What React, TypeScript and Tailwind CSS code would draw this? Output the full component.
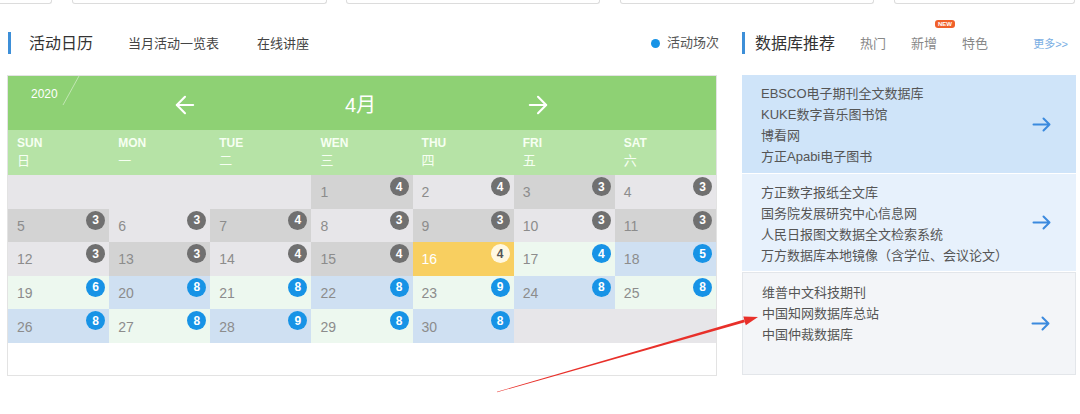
import { ArrowLeft, ArrowRight } from 'lucide-react'

const counts: Record<number, number> = {
  1: 4, 2: 4, 3: 3, 4: 3, 5: 3, 6: 3, 7: 4, 8: 3, 9: 3, 10: 3, 11: 3, 12: 3, 13: 3, 14: 4, 15: 4,
  16: 4, 17: 4, 18: 5, 19: 6, 20: 8, 21: 8, 22: 8, 23: 9, 24: 8, 25: 8, 26: 8, 27: 8, 28: 9, 29: 8, 30: 8
}

const weekdays = [
  ['SUN', '日'], ['MON', '一'], ['TUE', '二'], ['WEN', '三'], ['THU', '四'], ['FRI', '五'], ['SAT', '六']
]

const dbGroups = [
  { bg: 'bg-[#cfe4f9]', h: 'h-[98px]', pt: 'pt-[8px]', items: ['EBSCO电子期刊全文数据库', 'KUKE数字音乐图书馆', '博看网', '方正Apabi电子图书'] },
  { bg: 'bg-[#e7f1fc]', h: 'h-[97px]', pt: 'pt-[8px]', items: ['方正数字报纸全文库', '国务院发展研究中心信息网', '人民日报图文数据全文检索系统', '万方数据库本地镜像（含学位、会议论文）'] },
  { bg: 'bg-[#f3f5f8] border border-[#e3e6ea]', h: 'h-[103px]', pt: 'pt-[9px]', items: ['维普中文科技期刊', '中国知网数据库总站', '中国仲裁数据库'] }
]

function cellBg(day: number | null, parity: number) {
  if (day === null) return 'bg-[#e7e6e9]'
  if (day < 16) return parity ? 'bg-[#d3d3d3]' : 'bg-[#e7e6e9]'
  if (day === 16) return 'bg-[#f8cf60]'
  return parity ? 'bg-[#edf8ef]' : 'bg-[#cfe0f2]'
}

function badgeCls(day: number) {
  if (day < 16) return 'bg-[#707070] text-white'
  if (day === 16) return 'bg-[#fff8e2] text-[#555]'
  return 'bg-[#1793e6] text-white'
}

export default function App() {
  const cells: (number | null)[] = []
  for (let i = 0; i < 35; i++) {
    const d = i - 2
    cells.push(d >= 1 && d <= 30 ? d : null)
  }

  return (
    <div className="relative w-[1080px] h-[414px] overflow-hidden bg-white font-['Liberation_Sans','Noto_Sans_CJK_SC',sans-serif]">
      {/* cut-off boxes above */}
      <div className="flex h-[4px]">
        <div className="w-[52px] border border-t-0 border-l-0 border-[#dcdcdc] rounded-br-[3px]" />
        <div className="ml-[20px] w-[255px] border border-t-0 border-[#dcdcdc] rounded-b-[3px]" />
        <div className="ml-[19px] w-[254px] border border-t-0 border-[#dcdcdc] rounded-b-[3px]" />
        <div className="ml-[20px] w-[254px] border border-t-0 border-[#dcdcdc] rounded-b-[3px]" />
        <div className="ml-[20px] w-[181px] border border-t-0 border-[#dcdcdc] rounded-b-[3px]" />
      </div>

      <div className="flex pl-[7px] pt-[28px] gap-[25px]">
        {/* left: calendar */}
        <div className="w-[710px]">
          <div className="flex items-center h-[22px] ml-[1px]">
            <div className="w-[3px] h-[22px] bg-[#3d8fd8]" />
            <span className="ml-[18px] mt-[1px] text-[16px] text-[#333]">活动日历</span>
            <span className="ml-[35px] mt-[1px] text-[13px] text-[#444]">当月活动一览表</span>
            <span className="ml-[38px] mt-[1px] text-[13px] text-[#444]">在线讲座</span>
            <div className="ml-auto mr-[-2px] flex items-center">
              <span className="w-[9px] h-[9px] rounded-full bg-[#1793e6]" />
              <span className="ml-[7px] text-[13px] text-[#555]">活动场次</span>
            </div>
          </div>

          <div className="mt-[21px] h-[301px] border border-[#e3e3e3]">
            <div className="relative flex items-center h-[54px] bg-[#8ed174] text-white">
              <span className="absolute left-[23px] top-[9px] text-[12px]">2020</span>
              <svg className="absolute left-[54px] top-0" width="20" height="30">
                <line x1="17" y1="0" x2="1" y2="29" stroke="rgba(255,255,255,0.45)" strokeWidth="1" />
              </svg>
              <ArrowLeft className="ml-[163px] mt-[3px]" size={28} strokeWidth={1.8} />
              <span className="ml-[146px] mt-[3px] text-[20px]">4月</span>
              <ArrowRight className="ml-[148px] mt-[3px]" size={28} strokeWidth={1.8} />
            </div>
            <div className="grid grid-cols-7 h-[45px] bg-[#b6e3a6] text-[#f6fff2]">
              {weekdays.map(([en, zh]) => (
                <div key={en} className="pl-[9px] pt-[7px] leading-none">
                  <div className="text-[12px] font-bold">{en}</div>
                  <div className="mt-[5px] text-[13px]">{zh}</div>
                </div>
              ))}
            </div>
            <div className="grid grid-cols-7 grid-rows-5">
              {cells.map((day, i) => {
                const parity = (Math.floor(i / 7) + (i % 7)) % 2
                return (
                  <div key={i} className={`relative h-[33.6px] flex items-center pl-[9px] ${cellBg(day, parity)}`}>
                    {day !== null && (
                      <>
                        <span className={`mt-[2px] text-[14px] ${day === 16 ? 'text-white' : 'text-[#8c8c8c]'}`}>{day}</span>
                        <span className={`absolute top-[2px] right-[4px] w-[19px] h-[19px] rounded-full flex items-center justify-center text-[12px] font-bold ${badgeCls(day)}`}>
                          {counts[day]}
                        </span>
                      </>
                    )}
                  </div>
                )
              })}
            </div>
          </div>
        </div>

        {/* right: database recommendations */}
        <div className="w-[334px]">
          <div className="flex items-center h-[22px]">
            <div className="w-[3px] h-[22px] bg-[#3d8fd8]" />
            <span className="ml-[10px] mt-[1px] text-[16px] text-[#333]">数据库推荐</span>
            <span className="ml-[25px] mt-[1px] text-[13px] text-[#888]">热门</span>
            <span className="relative ml-[25px] mt-[1px] text-[13px] text-[#888]">
              新增
              <span className="absolute left-[24px] top-[-14px] w-[20px] h-[8px] rounded-[3px] bg-[#f0602a] text-white text-[6px] leading-[8px] text-center font-bold">NEW</span>
            </span>
            <span className="ml-[25px] mt-[1px] text-[13px] text-[#888]">特色</span>
            <span className="ml-auto mr-[8px] mt-[3px] text-[11px] text-[#7aaee3]">更多&gt;&gt;</span>
          </div>

          <div className="mt-[21px] flex flex-col gap-[1px]">
            {dbGroups.map((g, gi) => (
              <div key={gi} className={`flex items-center ${g.bg} ${g.h}`}>
                <div className={`self-start ${g.pt} pl-[19px] text-[13px] leading-[21px] text-[#555]`}>
                  {g.items.map((t) => (
                    <div key={t}>{t}</div>
                  ))}
                </div>
                <svg className="ml-auto mr-[25px]" width="19" height="15" viewBox="0 0 19 15" fill="none" stroke="#3b8ade" strokeWidth="2" strokeLinecap="round" strokeLinejoin="round">
                  <path d="M1.5 7.5H17.5M11.5 1.5L17.5 7.5L11.5 13.5" />
                </svg>
              </div>
            ))}
          </div>
        </div>
      </div>

      {/* red annotation arrow */}
      <svg className="absolute left-0 top-0 pointer-events-none" width="1080" height="414">
        <polygon points="497.07,392.24 744.9,322.3 744.1,319.5 496.93,391.76" fill="#e8302a" />
        <polygon points="758,317 745.8,325.2 743.3,316.6" fill="#e8302a" />
      </svg>
    </div>
  )
}
